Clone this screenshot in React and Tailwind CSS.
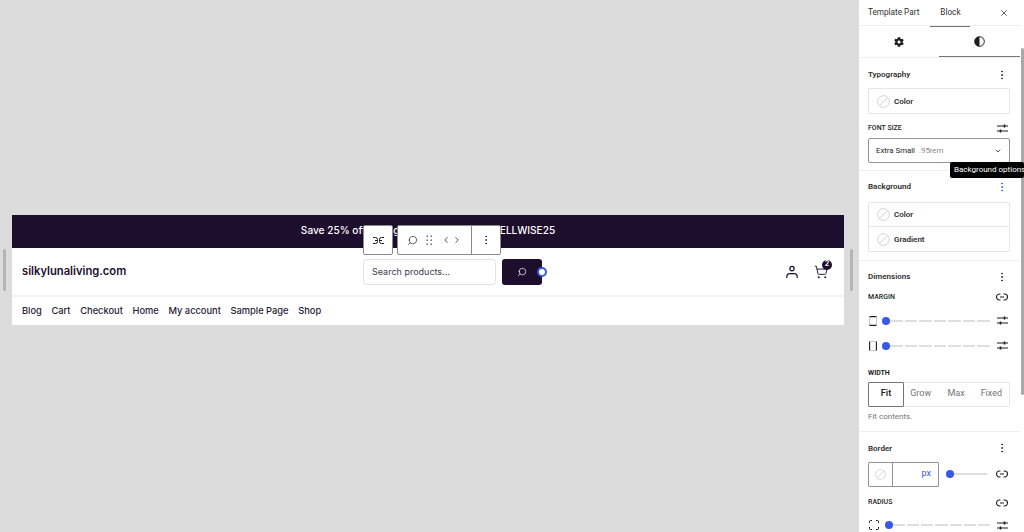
import React from 'react';
import { Search, X, ChevronDown, EllipsisVertical, ChevronLeft, ChevronRight, ShoppingCart } from 'lucide-react';
import { FaCog } from 'react-icons/fa';

const menuLinks = ['Blog', 'Cart', 'Checkout', 'Home', 'My account', 'Sample Page', 'Shop'];

const NoColor = ({ size = 13 }) => (
  <svg width={size} height={size} viewBox="0 0 14 14" fill="none" stroke="#c9c9c9" strokeWidth="0.9" className="shrink-0">
    <circle cx="7" cy="7" r="6.3" />
    <path d="M2.6 11.4 11.4 2.6" />
  </svg>
);

const Sliders = () => (
  <svg width="11" height="9" viewBox="0 0 11 9" fill="none" stroke="#1e1e1e" strokeWidth="1.1" className="shrink-0">
    <path d="M0 2h11M0 7h11" />
    <path d="M7.5 0.5v3M3.5 5.5v3" strokeWidth="1.6" />
  </svg>
);

const LinkIcon = () => (
  <svg width="12" height="8" viewBox="0 0 12 8" fill="none" stroke="#1e1e1e" strokeWidth="1.1" className="shrink-0">
    <path d="M4.5 1H3.5a3 3 0 0 0 0 6h1M7.5 1h1a3 3 0 0 1 0 6h-1M4 4h4" />
  </svg>
);

const Dots = ({ className = 'text-[#1e1e1e]' }) => (
  <EllipsisVertical size={12} strokeWidth={1.8} className={className} />
);

const Thumb = () => <span className="block h-2 w-2 shrink-0 rounded-full bg-[#3858e9]" />;

// dashed track with the thumb at the start
const MarkedSlider = ({ icon, gap = 'ml-[5px]' }) => (
  <div className="flex h-[25px] items-center pl-px pr-[2px]">
    {icon}
    <span className={`block shrink-0 ${gap}`}><Thumb /></span>
    <div className="flex flex-1 gap-[2px]">
      {[0, 1, 2, 3, 4, 5, 6].map((n) => (
        <span key={n} className="h-[2px] flex-1 bg-[#dedede]" />
      ))}
    </div>
    <span className="ml-[7px] block"><Sliders /></span>
  </div>
);

const SideBox = ({ label, last }) => (
  <div className={`flex h-[24px] items-center gap-[4px] pl-2 text-[8px] font-semibold text-[#2f2f2f] ${last ? '' : 'border-b border-[#e6e6e6]'}`}>
    <NoColor />
    <span className="pt-px">{label}</span>
  </div>
);

const SectionHead = ({ title, dots }) => (
  <div className="flex items-center justify-between pr-[2px]">
    <span className="text-[8px] font-semibold leading-[13px] text-[#2f2f2f]">{title}</span>
    {dots || <Dots />}
  </div>
);

const SmallLabel = ({ children, icon, className = '' }) => (
  <div className={`flex h-[14px] items-center justify-between pr-[2px] ${className}`}>
    <span className="text-[7px] font-medium text-[#1e1e1e]">{children}</span>
    {icon}
  </div>
);

const Toolbar = () => (
  <div className="absolute left-[351px] top-[10px] flex h-[30px] gap-[4px] font-['Roboto',sans-serif] text-[#1e1e1e]">
    <div className="flex w-[30px] items-center justify-center rounded-[2px] border border-[#8a8a8a] bg-white">
      <svg width="11" height="7" viewBox="0 0 11 7" fill="none" stroke="#1e1e1e" strokeWidth="1">
        <path d="M0 0.5h2.5a2 2 0 0 1 2 2v2a2 2 0 0 1-2 2H0M11 0.5H8.5a2 2 0 0 0-2 2v2a2 2 0 0 0 2 2H11M2 3.5h2.5M6.5 3.5H9" />
      </svg>
    </div>
    <div className="flex rounded-[2px] border border-[#8a8a8a] bg-white">
      <div className="flex w-[73px] items-center justify-between pl-[9px] pr-[9px]">
        <Search size={11} strokeWidth={1.5} className="-scale-x-100" />
        <svg width="7" height="11" viewBox="0 0 7 11" fill="#555">
          <rect x="0.5" y="0.5" width="1.4" height="1.4" />
          <rect x="4.5" y="0.5" width="1.4" height="1.4" />
          <rect x="0.5" y="4.5" width="1.4" height="1.4" />
          <rect x="4.5" y="4.5" width="1.4" height="1.4" />
          <rect x="0.5" y="8.5" width="1.4" height="1.4" />
          <rect x="4.5" y="8.5" width="1.4" height="1.4" />
        </svg>
        <span className="flex">
          <ChevronLeft size={10} strokeWidth={1.8} />
          <ChevronRight size={10} strokeWidth={1.8} className="ml-px" />
        </span>
      </div>
      <div className="flex w-[29px] items-center justify-center border-l border-[#8a8a8a]">
        <EllipsisVertical size={12} strokeWidth={1.6} />
      </div>
    </div>
  </div>
);

const Canvas = () => (
  <div className="relative min-w-0 flex-1 pl-[12px] pr-[11px] pt-[215px]">
    <div className="absolute left-[3px] top-[249px] h-[42px] w-[3px] rounded-sm bg-[#b5b5b5]" />
    <div className="absolute left-[850px] top-[249px] h-[42px] w-[3px] rounded-sm bg-[#b5b5b5]" />
    <div className="relative font-['Inter',sans-serif]">
      <div className="flex h-[33px] items-center justify-center bg-[#1e0e2e] text-[10.1px] font-medium text-white">
        <span className="-mt-px">Save 25% off during our sale with code SELLWISE25</span>
      </div>
      <div className="flex h-[49px] items-center border-b-2 border-[#f4f4f6] bg-white pl-[10px] pr-[16px]">
        <span className="w-[341px] shrink-0 text-[11.2px] font-semibold text-[#1e0e2e]">silkylunaliving.com</span>
        <div className="flex h-[26px] w-[133px] items-center rounded-[4px] border border-[#e2e2e6] pl-[8px] text-[9px] text-[#44394f]">
          Search products...
        </div>
        <div className="relative ml-[6px] flex h-[26px] w-[40px] items-center justify-center rounded-[3px] bg-[#1e0e2e]">
          <Search size={10} strokeWidth={1.6} className="-scale-x-100 text-white" />
          <span className="absolute -right-[5px] top-[8px] h-[10px] w-[10px] rounded-full border-2 border-[#3858e9] bg-white" />
        </div>
        <div className="ml-auto flex items-center gap-[15px] text-[#1e0e2e]">
          <svg width="14" height="14" viewBox="0 0 14 14" fill="none" stroke="#1e0e2e" strokeWidth="1.2">
            <circle cx="7" cy="3.6" r="2.2" />
            <path d="M1.8 13v-1.4a3 3 0 0 1 3-3h4.4a3 3 0 0 1 3 3V13" />
          </svg>
          <div className="relative">
            <ShoppingCart size={14} strokeWidth={1.6} />
            <span className="absolute -right-[4px] -top-[5px] flex h-[10px] w-[10px] items-center justify-center rounded-full bg-[#1e0e2e] text-[7px] font-bold text-white">2</span>
          </div>
        </div>
      </div>
      <div className="flex h-[28px] items-center gap-[9.7px] bg-white pl-[10px] text-[9.3px] font-medium text-[#2a1c3a]">
        {menuLinks.map((link) => (
          <span key={link}>{link}</span>
        ))}
      </div>
      <Toolbar />
    </div>
  </div>
);

const Sidebar = () => (
  <div className="relative flex w-[169px] shrink-0 border-l-[4px] border-[#dcdcdc] bg-white font-['Roboto',sans-serif]">
    <div className="w-[161px] shrink-0">
      {/* tabs */}
      <div className="flex h-[26px] items-center border-b border-[#eee] pl-[9px] pr-[11px] text-[8.2px] text-[#2f2f2f]">
        <span>Template Part</span>
        <span className="relative ml-[21px] flex h-[26px] items-center">
          Block
          <span className="absolute -left-[10px] -right-[9px] bottom-[-1px] h-px bg-[#757575]" />
        </span>
        <X size={10} strokeWidth={1.8} className="ml-auto" />
      </div>
      <div className="flex h-[32px] border-b border-[#f0f0f0]">
        <div className="flex w-[80px] items-center justify-center">
          <FaCog size={10} className="text-[#1e1e1e]" />
        </div>
        <div className="flex flex-1 items-center justify-center border-b border-[#757575]">
          <svg width="11" height="11" viewBox="0 0 11 11">
            <circle cx="5.5" cy="5.5" r="4.8" fill="#fff" stroke="#1e1e1e" strokeWidth="1" />
            <path d="M5.5 0.7a4.8 4.8 0 0 0 0 9.6z" fill="#1e1e1e" />
          </svg>
        </div>
      </div>

      {/* typography */}
      <div className="border-b border-[#eee] pb-[7px] pl-[9px] pr-[10px] pt-[10px]">
        <SectionHead title="Typography" />
        <div className="mt-[7px] rounded-[1px] border border-[#e6e6e6]">
          <SideBox label="Color" last />
        </div>
        <SmallLabel icon={<Sliders />} className="mt-[7px]">FONT SIZE</SmallLabel>
        <div className="mt-[3px] flex h-[25px] items-center justify-between rounded-[2px] border border-[#949494] px-[7px] text-[7.8px]">
          <span className="text-[#1e1e1e]">Extra Small <span className="ml-[2px] text-[#8a8a8a]">.95rem</span></span>
          <ChevronDown size={8} strokeWidth={2} />
        </div>
      </div>

      {/* background */}
      <div className="border-b border-[#eee] pb-[8px] pl-[9px] pr-[10px] pt-[9px]">
        <SectionHead title="Background" dots={<Dots className="text-[#3858e9]" />} />
        <div className="mt-[9px] rounded-[1px] border border-[#e6e6e6]">
          <SideBox label="Color" />
          <SideBox label="Gradient" last />
        </div>
      </div>

      {/* dimensions */}
      <div className="border-b border-[#eee] pb-[8px] pl-[9px] pr-[10px] pt-[9px]">
        <SectionHead title="Dimensions" />
        <SmallLabel icon={<LinkIcon />} className="mt-[7px]">MARGIN</SmallLabel>
        <div className="mt-[4px]">
          <MarkedSlider
            icon={
              <svg width="8" height="10" viewBox="0 0 8 10" fill="none" className="shrink-0">
                <rect x="0.5" y="0.5" width="7" height="9" rx="1" stroke="#bbb" strokeWidth="0.8" />
                <path d="M0.5 0.6h7M0.5 9.4h7" stroke="#1e1e1e" strokeWidth="1.1" />
              </svg>
            }
          />
          <MarkedSlider
            icon={
              <svg width="8" height="10" viewBox="0 0 8 10" fill="none" className="shrink-0">
                <rect x="0.5" y="0.5" width="7" height="9" rx="1" stroke="#bbb" strokeWidth="0.8" />
                <path d="M0.6 0.5v9M7.4 0.5v9" stroke="#1e1e1e" strokeWidth="1.1" />
              </svg>
            }
          />
        </div>
        <div className="mt-[10px] text-[7px] font-bold text-[#1e1e1e]">WIDTH</div>
        <div className="mt-[3px] flex h-[25px] rounded-[1px] border border-[#e6e6e6] text-[9px] text-[#757575]">
          <div className="-m-px flex w-[36px] items-center justify-center rounded-[1px] border border-[#757575] font-semibold text-[#1e1e1e]">Fit</div>
          <div className="flex flex-1 items-center justify-center">Grow</div>
          <div className="flex flex-1 items-center justify-center">Max</div>
          <div className="flex flex-1 items-center justify-center">Fixed</div>
        </div>
        <div className="mt-[4px] text-[8px] leading-[12px] text-[#757575]">Fit contents.</div>
      </div>

      {/* border */}
      <div className="pl-[9px] pr-[10px] pt-[10px]">
        <SectionHead title="Border" />
        <div className="mt-[7px] flex items-center pr-[2px]">
          <div className="flex h-[25px] w-[71px] shrink-0 rounded-[1px] border border-[#949494]">
            <div className="flex w-[24px] items-center justify-center border-r border-[#949494]">
              <NoColor size={11} />
            </div>
            <div className="flex flex-1 items-center justify-end pr-[7px] text-[9px] text-[#3858e9]">px</div>
          </div>
          <span className="ml-[7px] block"><Thumb /></span>
          <span className="h-[2px] flex-1 bg-[#dedede]" />
          <span className="ml-[9px] block"><LinkIcon /></span>
        </div>
        <SmallLabel icon={<LinkIcon />} className="mt-[9px]">RADIUS</SmallLabel>
        <div className="mt-[3px]">
          <MarkedSlider
            gap="ml-[6px]"
            icon={
              <svg width="10" height="10" viewBox="0 0 10 10" fill="none" stroke="#1e1e1e" strokeWidth="1" className="shrink-0">
                <path d="M0.5 3V1.5a1 1 0 0 1 1-1H3M7 0.5h1.5a1 1 0 0 1 1 1V3M9.5 7v1.5a1 1 0 0 1-1 1H7M3 9.5H1.5a1 1 0 0 1-1-1V7" />
              </svg>
            }
          />
        </div>
      </div>
    </div>

    {/* scrollbar */}
    <div className="relative w-[4px] bg-white">
      <div className="absolute left-[1px] top-[48px] h-[347px] w-[3px] rounded-sm bg-[#a8a8a8]" />
    </div>

    <div className="absolute left-[91px] top-[162px] flex h-[16px] w-[74px] items-center whitespace-nowrap rounded-[2px] bg-black pl-[4px] text-[8px] text-white">
      Background options
    </div>
  </div>
);

export default function App() {
  return (
    <div className="flex h-[532px] w-[1024px] overflow-hidden bg-[#dcdcdc]">
      <Canvas />
      <Sidebar />
    </div>
  );
}
